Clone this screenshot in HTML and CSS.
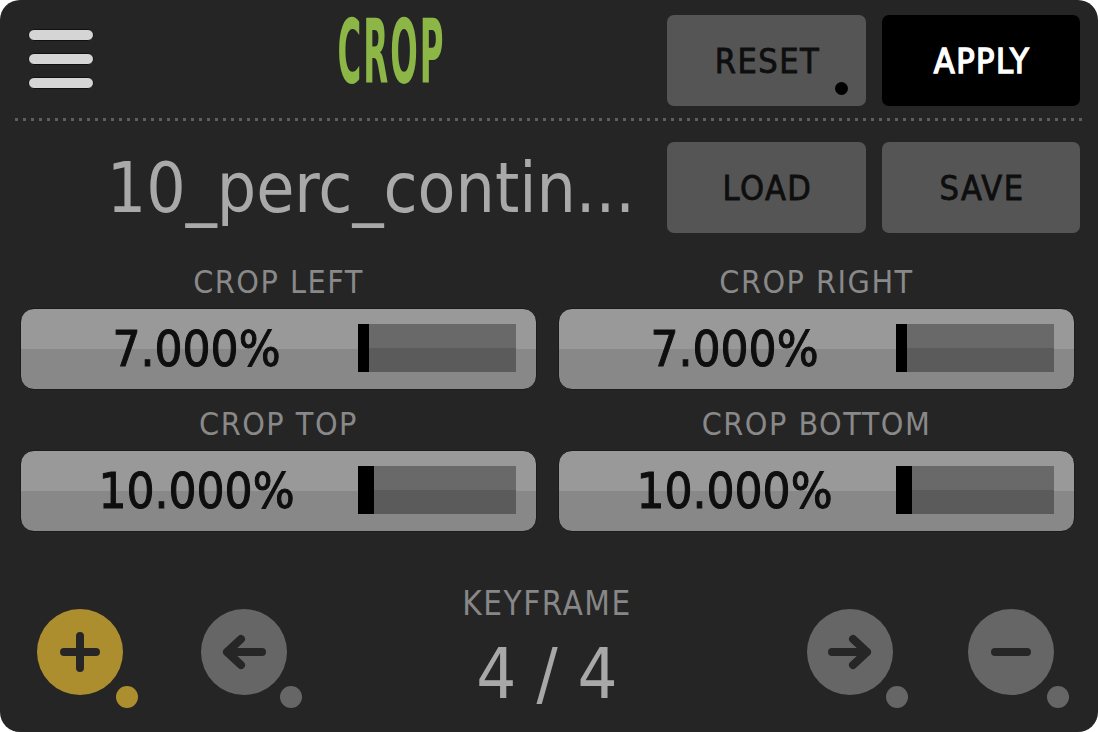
FILE: index.html
```html
<!DOCTYPE html>
<html>
<head>
<meta charset="utf-8">
<link rel="stylesheet" href="styles.css">
</head>
<body>
<div class="panel">
  <div class="row top">
    <div class="lead">
      <div class="burger"><span></span><span></span><span></span></div>
      <div class="title-wrap"><span class="title">CROP</span></div>
    </div>
    <div class="btn gray">RESET<span class="dot"></span></div>
    <div class="btn black">APPLY</div>
  </div>
  <div class="dots"></div>
  <div class="row file">
    <div class="filename">10_perc_contin...</div>
    <div class="btn gray">LOAD</div>
    <div class="btn gray">SAVE</div>
  </div>
  <div class="params">
    <div class="param">
      <div class="label">CROP LEFT</div>
      <div class="slider"><span class="value">7.000%</span><div class="track"><div class="fill" style="width:7%"></div></div></div>
    </div>
    <div class="param">
      <div class="label">CROP RIGHT</div>
      <div class="slider"><span class="value">7.000%</span><div class="track"><div class="fill" style="width:7%"></div></div></div>
    </div>
    <div class="param">
      <div class="label">CROP TOP</div>
      <div class="slider"><span class="value">10.000%</span><div class="track"><div class="fill" style="width:10%"></div></div></div>
    </div>
    <div class="param">
      <div class="label">CROP BOTTOM</div>
      <div class="slider"><span class="value">10.000%</span><div class="track"><div class="fill" style="width:10%"></div></div></div>
    </div>
  </div>
  <div class="footer">
    <div class="group left">
      <div class="circ gold">
        <svg viewBox="0 0 86 86" width="86" height="86"><path d="M43 27V59M27 43H59"/></svg>
        <span class="pip"></span>
      </div>
      <div class="circ">
        <svg viewBox="0 0 86 86" width="86" height="86"><path d="M61 43H26M40 30L26 43L40 56"/></svg>
        <span class="pip"></span>
      </div>
    </div>
    <div class="center">
      <div class="kf-label">KEYFRAME</div>
      <div class="kf-count">4 / 4</div>
    </div>
    <div class="group right">
      <div class="circ">
        <svg viewBox="0 0 86 86" width="86" height="86"><path d="M25 43H60M46 30L60 43L46 56"/></svg>
        <span class="pip"></span>
      </div>
      <div class="circ">
        <svg viewBox="0 0 86 86" width="86" height="86"><path d="M27 43H59"/></svg>
        <span class="pip"></span>
      </div>
    </div>
  </div>
</div>
</body>
</html>
```

FILE: styles.css
```css
html, body {
  margin: 0;
  background: #ffffff;
}

.panel {
  width: 1098px;
  height: 732px;
  box-sizing: border-box;
  background: #252525;
  border-radius: 20px;
  padding: 15px 18px 0 15px;
  font-family: "DejaVu Sans Condensed", "DejaVu Sans", sans-serif;
  overflow: hidden;
}

.row {
  display: grid;
  grid-template-columns: 1fr 199px 198px;
  column-gap: 16px;
  height: 91px;
}

.row.file {
  margin-top: 21px;
}

.lead {
  display: flex;
  align-items: center;
}

.burger {
  margin-left: 13px;
  margin-bottom: 4px;
  display: flex;
  flex-direction: column;
  gap: 12px;
}

.burger span {
  display: block;
  width: 64px;
  height: 10px;
  background: #d5d5d5;
  border: 1px solid #111;
  border-radius: 7px;
}

.title-wrap {
  flex: 1;
  text-align: center;
  padding-left: 38px;
  align-self: flex-start;
  margin-top: 21px;
  height: 36px;
}

.title {
  display: inline-block;
  font-weight: bold;
  font-size: 36px;
  line-height: 36px;
  color: #8cb646;
  letter-spacing: 2px;
  transform: scaleY(2.45);
}

.btn {
  position: relative;
  border-radius: 7px;
  display: flex;
  align-items: center;
  justify-content: center;
  font-size: 34px;
  letter-spacing: 1.5px;
  padding-left: 2px;
  -webkit-text-stroke: 0.8px currentColor;
}

.btn.gray {
  background: #555555;
  color: #0e0e0e;
}

.btn.black {
  background: #000000;
  color: #ffffff;
  -webkit-text-stroke: 1.4px currentColor;
}

.dot {
  position: absolute;
  width: 13px;
  height: 13px;
  border-radius: 50%;
  background: #000;
  right: 18px;
  bottom: 11px;
}

.dots {
  height: 3px;
  margin: 12px -3px 0 0;
  background: repeating-linear-gradient(to right, #5e5e5e 0 3px, transparent 3px 8px);
}

.filename {
  display: flex;
  align-items: center;
  justify-content: flex-end;
  padding-right: 16px;
  font-size: 69px;
  color: #a9a9a9;
  white-space: nowrap;
}

.params {
  display: grid;
  grid-template-columns: 1fr 1fr;
  column-gap: 21px;
  row-gap: 18px;
  margin: 33px 5px 0 5px;
}

.label {
  text-align: center;
  font-size: 32px;
  line-height: 32px;
  color: #898989;
  letter-spacing: 1.5px;
  margin-bottom: 10px;
}

.slider {
  height: 82px;
  box-sizing: border-box;
  border-radius: 14px;
  background: linear-gradient(#999999 50%, #888888 50%);
  border: 1px solid #1c1c1c;
  display: flex;
  align-items: center;
  padding-right: 20px;
}

.value {
  flex: 1;
  text-align: center;
  font-size: 49px;
  color: #0e0e0e;
  padding-left: 14px;
  -webkit-text-stroke: 1px currentColor;
}

.track {
  width: 158px;
  height: 48px;
  background: linear-gradient(#696969 50%, #5b5b5b 50%);
  margin-top: -2px;
}

.fill {
  height: 100%;
  background: #000;
}

.footer {
  display: flex;
  margin-top: 56px;
  padding: 0 26px 0 22px;
}

.group {
  display: flex;
  margin-top: 21px;
}

.group.left {
  gap: 78px;
}

.group.right {
  gap: 75px;
}

.center {
  flex: 1;
  text-align: center;
}

.kf-label {
  font-size: 33px;
  line-height: 32px;
  color: #878787;
  letter-spacing: 1.5px;
}

.kf-count {
  font-size: 70px;
  line-height: 70px;
  color: #a8a8a8;
  margin-top: 19px;
}

.circ {
  position: relative;
  width: 86px;
  height: 86px;
  border-radius: 50%;
  background: #666666;
}

.circ.gold {
  background: #ad8e2f;
}

.circ svg {
  display: block;
  fill: none;
  stroke: #262626;
  stroke-width: 8;
  stroke-linecap: round;
  stroke-linejoin: round;
}

.pip {
  position: absolute;
  left: 79px;
  top: 77px;
  width: 22px;
  height: 22px;
  border-radius: 50%;
  background: inherit;
}
```
